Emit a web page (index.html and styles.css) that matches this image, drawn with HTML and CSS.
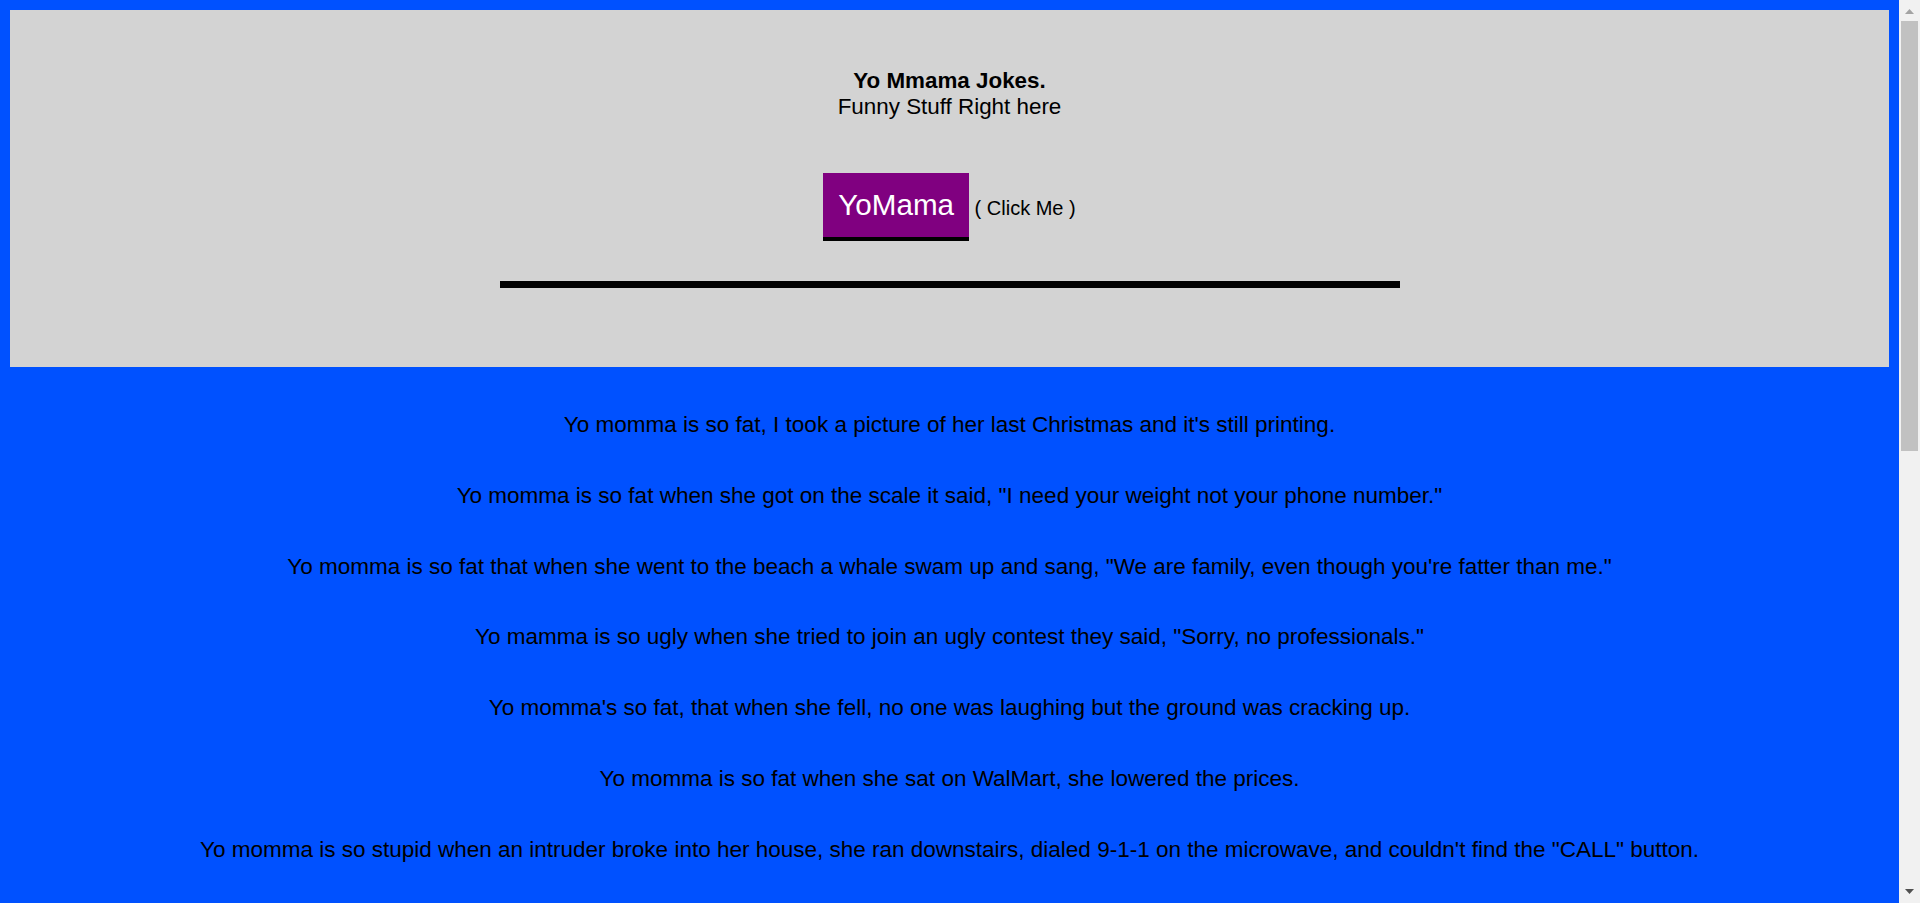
FILE: index.html
```html
<!DOCTYPE html>
<html lang="en">
<head>
<meta charset="utf-8">
<title>Yo Mmama Jokes</title>
<link rel="stylesheet" href="styles.css">
</head>
<body>
<header class="masthead">
  <div class="title">
    <span class="title-main">Yo Mmama Jokes.</span>
    <span class="title-sub">Funny Stuff Right here</span>
  </div>
  <div class="action-row"><button class="yomama-btn" type="button">YoMama</button> <span class="click-hint">( Click Me )</span></div>
  <div class="rule"></div>
</header>
<main class="jokes">
  <p class="joke">Yo momma is so fat, I took a picture of her last Christmas and it's still printing.</p>
  <p class="joke">Yo momma is so fat when she got on the scale it said, "I need your weight not your phone number."</p>
  <p class="joke">Yo momma is so fat that when she went to the beach a whale swam up and sang, "We are family, even though you're fatter than me."</p>
  <p class="joke">Yo mamma is so ugly when she tried to join an ugly contest they said, "Sorry, no professionals."</p>
  <p class="joke">Yo momma's so fat, that when she fell, no one was laughing but the ground was cracking up.</p>
  <p class="joke">Yo momma is so fat when she sat on WalMart, she lowered the prices.</p>
  <p class="joke">Yo momma is so stupid when an intruder broke into her house, she ran downstairs, dialed 9-1-1 on the microwave, and couldn't find the "CALL" button.</p>
</main>
<div class="scrollbar" aria-hidden="true">
  <div class="sb-btn sb-up">
    <svg width="9" height="5" viewBox="0 0 9 5"><polygon points="4.5,0 9,5 0,5" fill="#a3a3a3"/></svg>
  </div>
  <div class="sb-track"><div class="sb-thumb"></div></div>
  <div class="sb-btn sb-down">
    <svg width="9" height="5" viewBox="0 0 9 5"><polygon points="0,0 9,0 4.5,5" fill="#505050"/></svg>
  </div>
</div>
</body>
</html>
```
FILE: styles.css
```css
html {
  background: #0051ff;
}

body {
  margin: 10px 31px 10px 10px;
  background: #0051ff;
  color: #000;
  font-family: "Liberation Sans", Arial, sans-serif;
}

.masthead {
  background: #d3d3d3;
  display: flex;
  flex-direction: column;
  align-items: center;
  padding: 58px 0 79px;
}

.title {
  display: flex;
  flex-direction: column;
  align-items: center;
  font-size: 22.4px;
  line-height: 26px;
}

.title-main {
  font-weight: bold;
}

.action-row {
  margin-top: 53px;
  font-size: 20px;
  line-height: 23px;
  white-space: nowrap;
}

.yomama-btn {
  display: inline-block;
  vertical-align: baseline;
  margin: 0;
  padding: 15px;
  background: #800080;
  color: #fff;
  border: 0;
  border-bottom: 4px solid #000;
  border-radius: 0;
  font-family: "Liberation Sans", Arial, sans-serif;
  font-size: 29.6px;
  line-height: 34px;
  cursor: pointer;
}

.click-hint {
  font-size: 20px;
}

.rule {
  width: 900px;
  height: 7px;
  margin-top: 40px;
  background: #000;
}

.jokes {
  display: flex;
  flex-direction: column;
  gap: 45px;
  padding: 45px 0 0;
  text-align: center;
}

.joke {
  margin: 0;
  font-size: 22.5px;
  line-height: 25.8px;
  white-space: nowrap;
}

.scrollbar {
  position: fixed;
  top: 0;
  right: 0;
  width: 21px;
  height: 100vh;
  background: #f1f1f1;
  display: flex;
  flex-direction: column;
}

.sb-btn {
  height: 21px;
  flex: none;
  display: flex;
  justify-content: center;
}

.sb-up {
  align-items: flex-start;
  padding-top: 9px;
  box-sizing: border-box;
}

.sb-down {
  align-items: flex-start;
  padding-top: 7px;
  box-sizing: border-box;
}

.sb-btn svg {
  display: block;
}

.sb-track {
  flex: 1;
  padding: 0 2px;
}

.sb-thumb {
  height: 430px;
  background: #c1c1c1;
}
```
